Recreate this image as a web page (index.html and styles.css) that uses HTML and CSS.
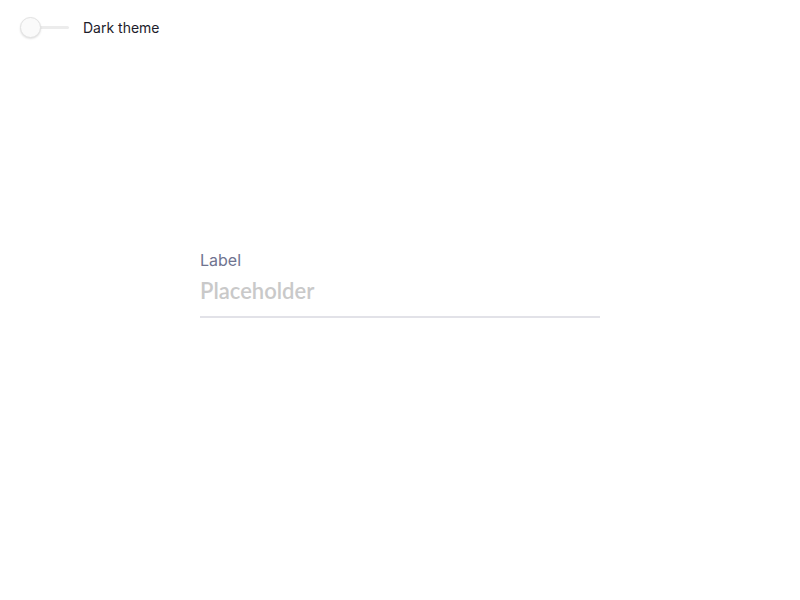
FILE: index.html
```html
<!DOCTYPE html>
<html>
<head>
<meta charset="utf-8">
<link rel="stylesheet" href="styles.css">
</head>
<body>
<div class="theme-row">
  <span class="switch"><span class="track"></span><span class="knob"></span></span>
  <span class="theme-label">Dark theme</span>
</div>
<div class="field-wrap">
  <label class="field">
    <span class="field-label">Label</span>
    <input class="field-input" type="text" placeholder="Placeholder">
  </label>
</div>
</body>
</html>
```
FILE: styles.css
```css
html, body { margin: 0; padding: 0; background: #fff; }
body { font-family: Inter, "Liberation Sans", sans-serif; width: 800px; height: 600px; }
.theme-row { display: flex; align-items: center; height: 21px; padding: 17px 0 0 20px; }
.switch { position: relative; width: 49px; height: 21px; display: block; }
.track { position: absolute; left: 10px; right: 0; top: 9px; height: 3px; background: #ececec; border-radius: 2px; }
.knob { position: absolute; left: 0; top: 0; width: 21px; height: 21px; border-radius: 50%; background: #fafafa; border: 1px solid #e2e2e2; box-shadow: 0 1px 2px rgba(0,0,0,0.12); box-sizing: border-box; }
.theme-label { margin-left: 14px; font-size: 14px; color: #1d1d2b; }
.field-wrap { display: flex; justify-content: center; padding-top: 212px; }
.field { display: flex; flex-direction: column; width: 400px; }
.field-label { font-size: 16px; color: #6f7490; line-height: 20px; }
.field-input { border: none; border-bottom: 2px solid #e2e2e8; padding: 7px 0 11px; font-family: Lato, "Liberation Sans", sans-serif; font-size: 22px; font-weight: 600; outline: none; background: transparent; line-height: 28px; }
.field-input::placeholder { color: #c9c9c9; }
```
